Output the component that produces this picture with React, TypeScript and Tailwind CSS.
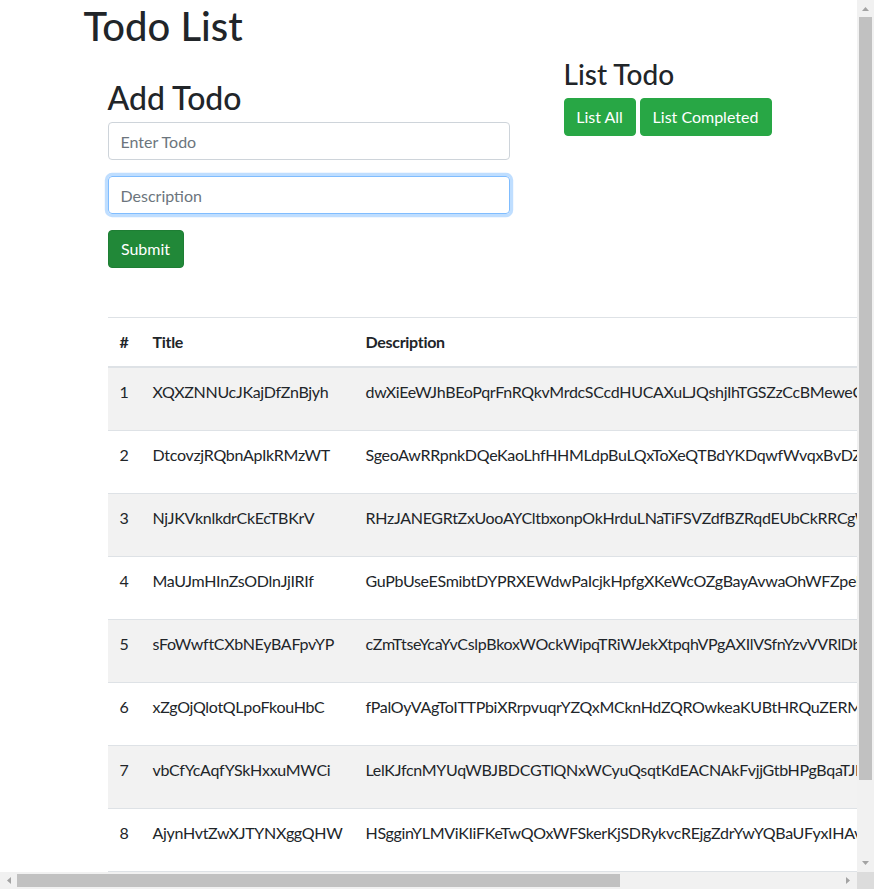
import React from "react";

const todos = [
  ["XQXZNNUcJKajDfZnBjyh", "dwXiEeWJhBEoPqrFnRQkvMrdcSCcdHUCAXuLJQshjIhTGSZzCcBMeweCkqPLzRtYaWnVbXeGmDfUoHs"],
  ["DtcovzjRQbnApIkRMzWT", "SgeoAwRRpnkDQeKaoLhfHHMLdpBuLQxToXeQTBdYKDqwfWvqxBvDZlNmRcTyUaPeGhJkWsOiFbXv"],
  ["NjJKVknlkdrCkEcTBKrV", "RHzJANEGRtZxUooAYCltbxonpOkHrduLNaTiFSVZdfBZRqdEUbCkRRCgWmLpYsTvNhQaXeJiKo"],
  ["MaUJmHInZsODlnJjIRIf", "GuPbUseESmibtDYPRXEWdwPaIcjkHpfgXKeWcOZgBayAvwaOhWFZpeRtLqMnSdVyJxUiCoKb"],
  ["sFoWwftCXbNEyBAFpvYP", "cZmTtseYcaYvCslpBkoxWOckWipqTRiWJekXtpqhVPgAXIlVSfnYzvVVRlDbNuGhMrKaEoQj"],
  ["xZgOjQlotQLpoFkouHbC", "fPalOyVAgToITTPbiXRrpvuqrYZQxMCknHdZQROwkeaKUBtHRQuZERMsLjWnGyDfXcVhBi"],
  ["vbCfYcAqfYSkHxxuMWCi", "LelKJfcnMYUqWBJBDCGTlQNxWCyuQsqtKdEACNAkFvjjGtbHPgBqaTJRmZsXoVhPeYwLi"],
  ["AjynHvtZwXJTYNXggQHW", "HSgginYLMViKIiFKeTwQOxWFSkerKjSDRykvcREjgZdrYwYQBaUFyxIHAvMtNpLbCoJu"],
  ["qTrNbYwKcLpMzXaVsDfG", "JkHgFdSaQwErTyUiOpLkJhGfDsAzXcVbNmQwErTyUiOpAsDfGhJkLzXcVbNmPoIuYtRe"],
];

const Arrow = ({ points }: { points: string }) => (
  <svg width="17" height="17" viewBox="0 0 17 17">
    <polygon points={points} fill="#a3a3a3" />
  </svg>
);

export default function App() {
  return (
    <div className="flex h-[889px] w-[874px] flex-col overflow-hidden bg-white font-['Lato',sans-serif] text-[#212529]">
      <div className="flex min-h-0 flex-1">
        {/* Page */}
        <div className="min-w-0 flex-1 overflow-hidden">
          <div className="mx-auto w-[720px] px-[15px]">
            <h1 className="mb-2 h-[48px] pt-[2px] text-[40px] leading-[1.2] font-medium">Todo List</h1>

            <div className="flex items-start">
              {/* Add Todo */}
              <div className="mt-5 ml-6 w-[402px]">
                <h2 className="mb-2 h-[38.4px] pt-[3px] text-[32px] leading-[1.2] font-medium">Add Todo</h2>
                <input
                  placeholder="Enter Todo"
                  className="mb-4 block h-[38px] w-full rounded border border-[#ced4da] px-3 text-base placeholder:text-[#6c757d] outline-none"
                />
                <input
                  placeholder="Description"
                  className="mb-4 block h-[38px] w-full rounded border border-[#80bdff] px-3 text-base shadow-[0_0_0_3.2px_rgba(0,123,255,0.25)] placeholder:text-[#6c757d] outline-none"
                />
                <button className="h-[38px] w-[76px] rounded border border-[#1e7e34] bg-[#218838] text-base text-white">
                  Submit
                </button>
              </div>

              {/* List Todo */}
              <div className="ml-[54px]">
                <h3 className="mb-2 h-[33.6px] pt-[2px] text-[28px] leading-[1.2] font-medium">List Todo</h3>
                <div className="flex gap-1">
                  <button className="h-[38px] w-[72px] rounded border border-[#28a745] bg-[#28a745] text-base text-white">
                    List All
                  </button>
                  <button className="h-[38px] w-[132px] rounded border border-[#28a745] bg-[#28a745] text-base text-white">
                    List Completed
                  </button>
                </div>
              </div>
            </div>

            {/* Table */}
            <table className="mt-[49px] ml-6 w-[1040px] table-fixed border-collapse text-base leading-6 tracking-[-0.3px]">
              <thead>
                <tr>
                  <th className="w-[33px] border-t border-b-2 border-[#dee2e6] p-3 text-left align-top font-bold">#</th>
                  <th className="w-[213px] border-t border-b-2 border-[#dee2e6] p-3 text-left align-top font-bold">Title</th>
                  <th className="w-[594px] border-t border-b-2 border-[#dee2e6] p-3 text-left align-top font-bold">Description</th>
                  <th className="border-t border-b-2 border-[#dee2e6] p-3 text-left align-top font-bold">Actions</th>
                </tr>
              </thead>
              <tbody>
                {todos.map(([title, desc], i) => (
                  <tr key={title} className={i % 2 === 0 ? "bg-[#f2f2f2]" : "bg-white"}>
                    <td className="border-t border-[#dee2e6] p-3 align-top">{i + 1}</td>
                    <td className="border-t border-[#dee2e6] p-3 align-top whitespace-nowrap">{title}</td>
                    <td className="overflow-hidden border-t border-[#dee2e6] p-3 align-top whitespace-nowrap">{desc}</td>
                    <td className="border-t border-[#dee2e6] p-3 align-top whitespace-nowrap">
                      <div className="flex gap-1">
                        <button className="h-[38px] rounded border border-[#28a745] bg-[#28a745] px-3 text-white">Done</button>
                        <button className="h-[38px] rounded border border-[#dc3545] bg-[#dc3545] px-3 text-white">Delete</button>
                      </div>
                    </td>
                  </tr>
                ))}
              </tbody>
            </table>
          </div>
        </div>

        {/* Vertical scrollbar */}
        <div className="flex w-[17px] flex-col bg-[#f1f1f1]">
          <Arrow points="5,11 12,11 8.5,7" />
          <div className="mx-[2px] h-[763px] bg-[#c1c1c1]" />
          <div className="flex-1" />
          <Arrow points="5,6 12,6 8.5,10" />
        </div>
      </div>

      {/* Horizontal scrollbar */}
      <div className="flex h-[17px] bg-[#f1f1f1]">
        <Arrow points="11,5 11,12 7,8.5" />
        <div className="my-[2px] w-[603px] bg-[#c1c1c1]" />
        <div className="flex-1" />
        <Arrow points="6,5 6,12 10,8.5" />
        <div className="w-[17px] bg-[#dcdcdc]" />
      </div>
    </div>
  );
}
